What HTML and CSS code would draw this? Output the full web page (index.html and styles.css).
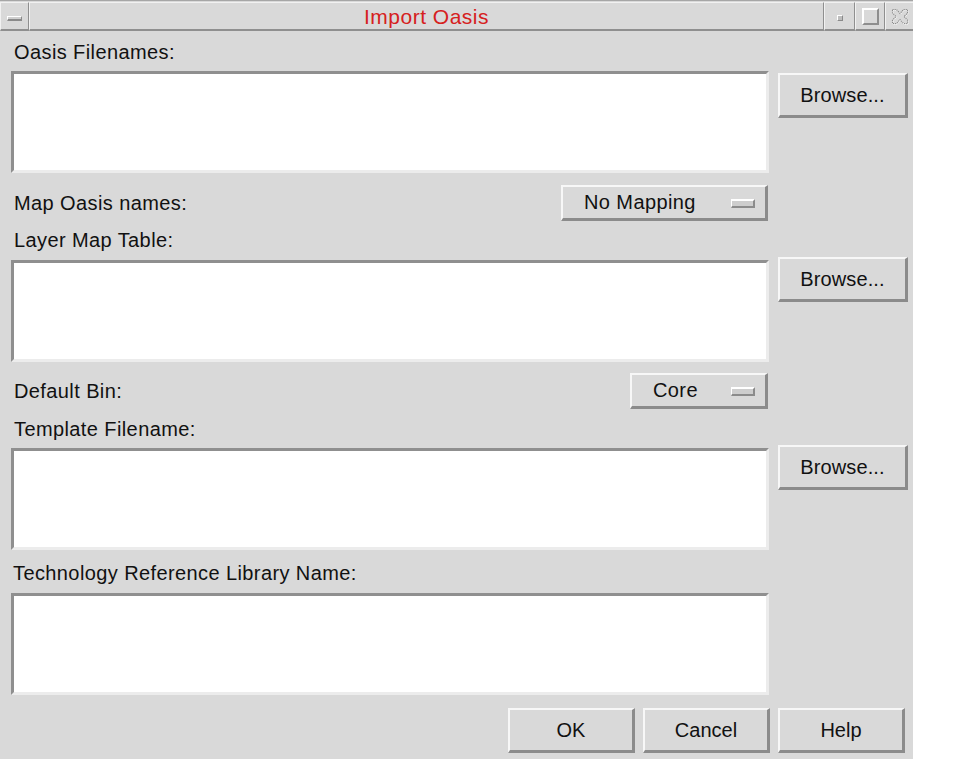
FILE: index.html
```html
<!DOCTYPE html>
<html>
<head>
<meta charset="utf-8">
<title>Import Oasis</title>
<link rel="stylesheet" href="styles.css">
</head>
<body>
<div class="window">
  <div class="titlebar">
    <div class="tb-btn tb-menu"><span class="tb-bar"></span></div>
    <div class="tb-btn tb-title">Import Oasis</div>
    <div class="tb-btn tb-min"><span class="tb-dot"></span></div>
    <div class="tb-btn tb-max"><span class="tb-sq"></span></div>
    <div class="tb-btn tb-close">
      <svg width="20" height="19" viewBox="0 0 20 19">
        <path d="M2.5 2.5 H6.5 L10 6.5 L13.5 2.5 H17.5 V6 L14 9.5 L17.5 13 V16.5 H13.5 L10 12.5 L6.5 16.5 H2.5 V13 L6 9.5 L2.5 6 Z" fill="none" stroke="#ffffff" stroke-width="1" stroke-dasharray="1 1" transform="translate(0.7 0.7)"/>
        <path d="M2.5 2.5 H6.5 L10 6.5 L13.5 2.5 H17.5 V6 L14 9.5 L17.5 13 V16.5 H13.5 L10 12.5 L6.5 16.5 H2.5 V13 L6 9.5 L2.5 6 Z" fill="none" stroke="#8c8c8c" stroke-width="1.1" stroke-dasharray="1.2 0.9"/>
      </svg>
    </div>
  </div>
  <div class="content">
    <div class="label lab1">Oasis Filenames:</div>
    <div class="row row1">
      <div class="field"></div>
      <div class="btn browse br1">Browse...</div>
    </div>
    <div class="optrow opt1">
      <span class="label">Map Oasis names:</span>
      <div class="option opt-wide">No Mapping<span class="ind"></span></div>
    </div>
    <div class="label lab2">Layer Map Table:</div>
    <div class="row row2">
      <div class="field"></div>
      <div class="btn browse br2">Browse...</div>
    </div>
    <div class="optrow opt2">
      <span class="label">Default Bin:</span>
      <div class="option opt-narrow">Core<span class="ind"></span></div>
    </div>
    <div class="label lab3">Template Filename:</div>
    <div class="row row3">
      <div class="field"></div>
      <div class="btn browse br3">Browse...</div>
    </div>
    <div class="label lab4">Technology Reference Library Name:</div>
    <div class="row row4">
      <div class="field"></div>
    </div>
    <div class="actions">
      <div class="btn action">OK</div>
      <div class="btn action">Cancel</div>
      <div class="btn action">Help</div>
    </div>
  </div>
</div>
</body>
</html>
```

FILE: styles.css
```css
html, body {
  margin: 0;
  padding: 0;
  background: #ffffff;
}

body {
  font-family: "Liberation Sans", Arial, sans-serif;
  color: #111111;
}

.window {
  width: 913px;
  height: 759px;
  background: #d9d9d9;
  display: flex;
  flex-direction: column;
  overflow: hidden;
}

/* ---------- title bar ---------- */
.titlebar {
  height: 31px;
  box-sizing: border-box;
  border-top: 1px solid #a6a6a6;
  padding-top: 1px;
  display: flex;
  flex: none;
}

.tb-btn {
  box-sizing: border-box;
  height: 29px;
  border-top: 1px solid #f1f1f1;
  border-left: 1px solid #f1f1f1;
  border-right: 1px solid #8f8f8f;
  border-bottom: 2px solid #8f8f8f;
  display: flex;
  align-items: center;
  justify-content: center;
  flex: none;
}

.tb-menu { width: 29px; }
.tb-title {
  flex: 1;
  font-size: 21px;
  line-height: 26px;
  letter-spacing: 0.5px;
  color: #d62020;
  padding-top: 1px;
}
.tb-min { width: 31px; }
.tb-max { width: 30px; }
.tb-close { width: 28px; border-right: none; padding-top: 1px; }

.tb-bar {
  width: 15px;
  height: 5px;
  box-sizing: border-box;
  background: #cfcfcf;
  border-top: 1px solid #ffffff;
  border-left: 1px solid #ffffff;
  border-right: 1px solid #8a8a8a;
  border-bottom: 2px solid #8a8a8a;
  margin-top: 4px;
  margin-left: -1px;
}

.tb-dot {
  width: 6px;
  height: 6px;
  box-sizing: border-box;
  background: #bdbdbd;
  border-top: 1px solid #ffffff;
  border-left: 1px solid #ffffff;
  border-right: 1px solid #8a8a8a;
  border-bottom: 1px solid #8a8a8a;
  margin-top: 4px;
}

.tb-sq {
  width: 17px;
  height: 17px;
  box-sizing: border-box;
  border-top: 2px solid #ffffff;
  border-left: 2px solid #ffffff;
  border-right: 2px solid #8e8e8e;
  border-bottom: 2px solid #8e8e8e;
  margin-top: 1px;
}

/* ---------- content ---------- */
.content {
  padding: 0 5px 0 11px;
  display: flex;
  flex-direction: column;
}

.label {
  font-size: 20px;
  line-height: 23px;
  padding-left: 3px;
  letter-spacing: 0.4px;
  white-space: nowrap;
}

.lab1 { margin-top: 10px; }
.lab2 { margin-top: 8px; }
.lab3 { margin-top: 9px; }
.lab4 { margin-top: 12px; padding-left: 2px; }

.row {
  display: flex;
  align-items: flex-start;
  gap: 9px;
}

.row1 { margin-top: 7px; }
.row2 { margin-top: 8px; }
.row3 { margin-top: 7px; }
.row4 { margin-top: 8px; }

.field {
  width: 758px;
  height: 102px;
  box-sizing: border-box;
  background: #ffffff;
  border-top: 3px solid #8f8f8f;
  border-left: 3px solid #8f8f8f;
  border-right: 3px solid #ececec;
  border-bottom: 3px solid #ececec;
  flex: none;
}

.btn {
  box-sizing: border-box;
  height: 45px;
  background: #d9d9d9;
  border-top: 2px solid #f7f7f7;
  border-left: 2px solid #f7f7f7;
  border-right: 3px solid #8b8b8b;
  border-bottom: 3px solid #8b8b8b;
  font-size: 20px;
  line-height: 23px;
  display: flex;
  align-items: center;
  justify-content: center;
  color: #111111;
  flex: none;
}

.browse {
  width: 130px;
  letter-spacing: 0.1px;
}

.br1 { margin-top: 2px; }
.br2 { margin-top: -3px; }
.br3 { margin-top: -3px; }

.optrow {
  display: flex;
  align-items: center;
  justify-content: space-between;
  width: 757px;
}

.opt1 { margin-top: 12px; }
.opt2 { margin-top: 11px; }

.option {
  box-sizing: border-box;
  height: 36px;
  background: #d9d9d9;
  border-top: 2px solid #f7f7f7;
  border-left: 2px solid #f7f7f7;
  border-right: 3px solid #8b8b8b;
  border-bottom: 3px solid #8b8b8b;
  font-size: 20px;
  line-height: 23px;
  letter-spacing: 0.4px;
  display: flex;
  align-items: center;
  justify-content: space-between;
  padding: 0 10px 0 21px;
}

.opt-wide { width: 207px; }
.opt-narrow { width: 138px; }

.ind {
  width: 24px;
  height: 9px;
  box-sizing: border-box;
  background: #cdcdcd;
  border-top: 2px solid #ffffff;
  border-left: 1px solid #ffffff;
  border-right: 2px solid #8b8b8b;
  border-bottom: 2px solid #8b8b8b;
  margin-top: 2px;
}

.actions {
  display: flex;
  justify-content: flex-end;
  gap: 8px;
  margin-top: 13px;
  padding-right: 3px;
}

.action {
  width: 127px;
}
```
